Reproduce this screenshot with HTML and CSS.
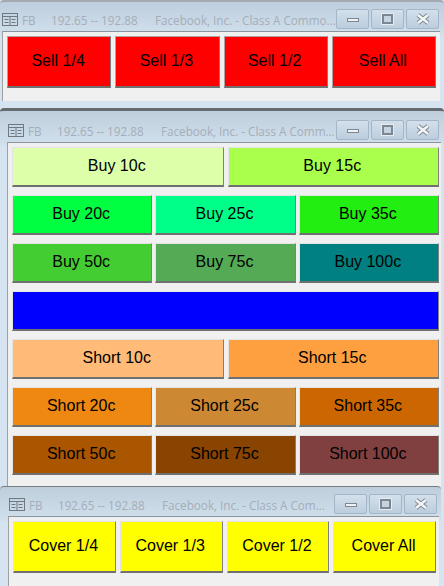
FILE: index.html
```html
<!DOCTYPE html>
<html lang="en">
<head>
    <meta charset="UTF-8">
    <title>Order Buttons</title>
    <link rel="stylesheet" href="styles.css">
</head>
<body>

<!-- ===== SELL WINDOW ===== -->
<div class="window sell_window">
    <div class="title_bar">
        <svg class="app_icon" width="16" height="13" viewBox="0 0 16 13">
            <rect x="0.5" y="0.5" width="15" height="12" fill="none" stroke="#6f7780"/>
            <path d="M1 3.5H15M8 4V12M2.5 6.5H6.5M2.5 9.5H6.5M9.5 6.5H13.5M9.5 9.5H13.5" fill="none" stroke="#6f7780"/>
        </svg>
        <span class="symbol">FB</span>
        <span class="quote">192.65 -- 192.88</span>
        <span class="company">Facebook, Inc. - Class A Commo...</span>
        <div class="window_buttons">
            <div class="win_btn"><span class="min_glyph"></span></div>
            <div class="win_btn"><span class="max_glyph"></span></div>
            <div class="win_btn">
                <svg width="14" height="12" viewBox="0 0 14 12">
                    <path d="M2 2L12 10M12 2L2 10" fill="none" stroke="#7d8792" stroke-width="4.5"/>
                    <path d="M2 2L12 10M12 2L2 10" fill="none" stroke="#f2f4f6" stroke-width="2.5"/>
                </svg>
            </div>
        </div>
    </div>
    <div class="client four_grid">
        <button class="red">Sell 1/4</button>
        <button class="red">Sell 1/3</button>
        <button class="red">Sell 1/2</button>
        <button class="red">Sell All</button>
    </div>
</div>

<!-- ===== BUY / SHORT WINDOW ===== -->
<div class="window main_window">
    <div class="title_bar">
        <svg class="app_icon" width="16" height="13" viewBox="0 0 16 13">
            <rect x="0.5" y="0.5" width="15" height="12" fill="none" stroke="#6f7780"/>
            <path d="M1 3.5H15M8 4V12M2.5 6.5H6.5M2.5 9.5H6.5M9.5 6.5H13.5M9.5 9.5H13.5" fill="none" stroke="#6f7780"/>
        </svg>
        <span class="symbol">FB</span>
        <span class="quote">192.65 -- 192.88</span>
        <span class="company">Facebook, Inc. - Class A Comm...</span>
        <div class="window_buttons">
            <div class="win_btn"><span class="min_glyph"></span></div>
            <div class="win_btn"><span class="max_glyph"></span></div>
            <div class="win_btn">
                <svg width="14" height="12" viewBox="0 0 14 12">
                    <path d="M2 2L12 10M12 2L2 10" fill="none" stroke="#7d8792" stroke-width="4.5"/>
                    <path d="M2 2L12 10M12 2L2 10" fill="none" stroke="#f2f4f6" stroke-width="2.5"/>
                </svg>
            </div>
        </div>
    </div>
    <div class="client rows">
        <div class="row two">
            <button style="background-color: #ddffaa">Buy 10c</button>
            <button style="background-color: #aaff4d">Buy 15c</button>
        </div>
        <div class="row three">
            <button style="background-color: #00ff40">Buy 20c</button>
            <button style="background-color: #00ff88">Buy 25c</button>
            <button style="background-color: #22ee11">Buy 35c</button>
        </div>
        <div class="row three">
            <button style="background-color: #44cc33">Buy 50c</button>
            <button style="background-color: #55aa55">Buy 75c</button>
            <button style="background-color: #008080">Buy 100c</button>
        </div>
        <div class="row one">
            <button style="background-color: #0000ff"></button>
        </div>
        <div class="row two">
            <button style="background-color: #ffbb77">Short 10c</button>
            <button style="background-color: #ffa040">Short 15c</button>
        </div>
        <div class="row three">
            <button style="background-color: #ee8811">Short 20c</button>
            <button style="background-color: #cc8833">Short 25c</button>
            <button style="background-color: #cc6600">Short 35c</button>
        </div>
        <div class="row three">
            <button style="background-color: #aa5500">Short 50c</button>
            <button style="background-color: #884400">Short 75c</button>
            <button style="background-color: #804040">Short 100c</button>
        </div>
    </div>
</div>

<!-- ===== COVER WINDOW ===== -->
<div class="window cover_window">
    <div class="title_bar">
        <svg class="app_icon" width="16" height="13" viewBox="0 0 16 13">
            <rect x="0.5" y="0.5" width="15" height="12" fill="none" stroke="#6f7780"/>
            <path d="M1 3.5H15M8 4V12M2.5 6.5H6.5M2.5 9.5H6.5M9.5 6.5H13.5M9.5 9.5H13.5" fill="none" stroke="#6f7780"/>
        </svg>
        <span class="symbol">FB</span>
        <span class="quote">192.65 -- 192.88</span>
        <span class="company">Facebook, Inc. - Class A Com...</span>
        <div class="window_buttons">
            <div class="win_btn"><span class="min_glyph"></span></div>
            <div class="win_btn"><span class="max_glyph"></span></div>
            <div class="win_btn">
                <svg width="14" height="12" viewBox="0 0 14 12">
                    <path d="M2 2L12 10M12 2L2 10" fill="none" stroke="#7d8792" stroke-width="4.5"/>
                    <path d="M2 2L12 10M12 2L2 10" fill="none" stroke="#f2f4f6" stroke-width="2.5"/>
                </svg>
            </div>
        </div>
    </div>
    <div class="client four_grid">
        <button class="yellow">Cover 1/4</button>
        <button class="yellow">Cover 1/3</button>
        <button class="yellow">Cover 1/2</button>
        <button class="yellow">Cover All</button>
    </div>
</div>

</body>
</html>
```

FILE: styles.css
```css
html, body {
    margin: 0;
    height: 586px;
    overflow: hidden;
}

body {
    font-family: "Liberation Sans", Arial, sans-serif;
    background-color: #d6e4f1;
    display: flex;
    flex-direction: column;
}

/* ===== Window frame ===== */
.window {
    box-sizing: border-box;
    flex: none;
    width: 444px;
    background: linear-gradient(#bfcedc, #d0dfec 32px, #d6e4f1 36px);
    border-radius: 4px 4px 0 0;
}

.sell_window {
    height: 108px;
    padding: 0 4px 0 2px;
    border-top: 2px solid #a3a9af;
}

.main_window {
    height: 378px;
    padding: 0 3px 0 7px;
    border-top: 3px solid #666b70;
}

.cover_window {
    width: 441px;
    height: 100px;
    padding: 0 2px 0 8px;
    border-top: 1px solid #777c81;
}

.title_bar {
    box-sizing: border-box;
    display: flex;
    align-items: flex-end;
    height: 29px;
    font-family: "Open Sans", sans-serif;
    font-size: 11.7px;
    line-height: 16px;
    padding-bottom: 3px;
    color: #a4aeb8;
    white-space: nowrap;
}

.main_window .title_bar {
    height: 31px;
}

.app_icon {
    flex: none;
    margin-right: 4px;
    margin-bottom: 2px;
}

.main_window .app_icon,
.cover_window .app_icon {
    margin-left: 1px;
}

.symbol {
    width: 29px;
}

.quote {
    width: 104px;
}

.company {
    flex: 1;
}

.window_buttons {
    display: flex;
    gap: 2px;
    margin-bottom: -1px;
    margin-right: 1px;
}

.main_window .window_buttons,
.cover_window .window_buttons {
    margin-right: 2px;
}

.win_btn {
    box-sizing: border-box;
    width: 33px;
    height: 20px;
    border: 1px solid #a3b5c7;
    border-radius: 2px;
    background: linear-gradient(#d3e0ec, #bccddd);
    display: flex;
    align-items: center;
    justify-content: center;
}

.min_glyph {
    box-sizing: border-box;
    width: 12px;
    height: 4px;
    margin-top: 2px;
    background-color: #eef2f5;
    border: 1px solid #7d8792;
}

.max_glyph {
    box-sizing: border-box;
    width: 11px;
    height: 10px;
    background-color: #c6d4e1;
    border: 2px solid #7d8792;
    outline: 1px solid #e6ecf1;
}

/* ===== Client area ===== */
.client {
    box-sizing: border-box;
    background-color: #f0f0f0;
    border-top: 1px solid #8b949d;
    border-left: 1px solid #a0a0a0;
}

.sell_window .client {
    height: 70px;
    padding: 4px 4px 0 4px;
}

.main_window .client {
    height: 344px;
    padding: 4px 2px 0 4px;
}

.cover_window .client {
    height: 70px;
    padding: 4px 3px 0 4px;
}

.four_grid {
    display: grid;
    grid-template-columns: repeat(4, 1fr);
    gap: 4px;
    align-items: start;
}

.rows {
    display: flex;
    flex-direction: column;
    gap: 8px;
}

.row {
    display: grid;
}

.one { grid-template-columns: 1fr; }
.two { grid-template-columns: repeat(2, 1fr); gap: 4px; }
.three { grid-template-columns: repeat(3, 1fr); gap: 3px; }

button {
    box-sizing: border-box;
    height: 40px;
    padding: 0 2px 1px 0;
    font-family: "Liberation Sans", Arial, sans-serif;
    font-size: 16px;
    color: #000;
    border: 1px solid;
    border-color: #e3e3e3 #7f7f7f #707070 #e3e3e3;
    border-bottom-width: 2px;
}

.four_grid button {
    height: 52px;
}

.red {
    background-color: #ff0000;
    border-color: #b0a0a0 #7f7f7f #707070 #b0a0a0;
    padding-bottom: 2px;
}

.yellow {
    background-color: #ffff00;
}
```
